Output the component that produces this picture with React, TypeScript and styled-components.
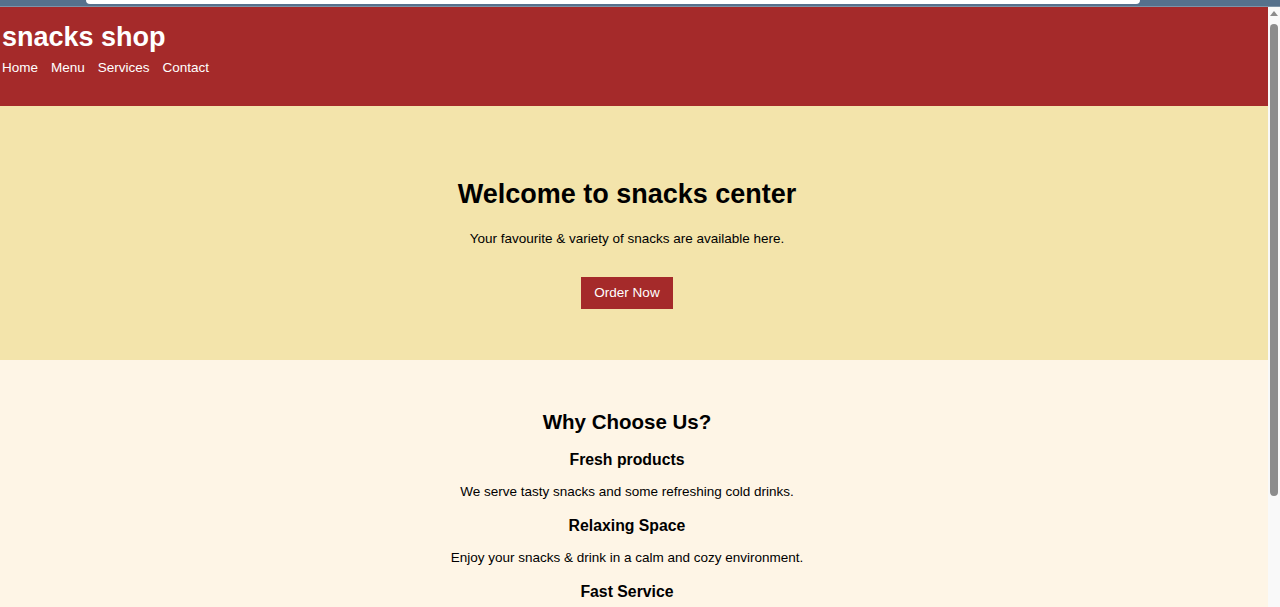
import React from 'react';
import styled, { createGlobalStyle } from 'styled-components';

const GlobalStyle = createGlobalStyle`
  html, body {
    margin: 0;
    padding: 0;
    overflow: hidden;
  }
  body {
    font-family: "Liberation Sans", Arial, sans-serif;
    color: #000;
  }
`;

const features = [
  { title: 'Fresh products', text: 'We serve tasty snacks and some refreshing cold drinks.' },
  { title: 'Relaxing Space', text: 'Enjoy your snacks & drink in a calm and cozy environment.' },
  { title: 'Fast Service', text: 'Quick service so you never have to wait long.' },
];

const App: React.FC = () => {
  return (
    <>
      <GlobalStyle />
      <Window>
        <TabStrip>
          <AddressPill />
        </TabStrip>
        <Viewport>
          <Page>
            <Header>
              <Logo>snacks shop</Logo>
              <Nav>
                <NavLink href="#">Home</NavLink>
                <NavLink href="#">Menu</NavLink>
                <NavLink href="#">Services</NavLink>
                <NavLink href="#">Contact</NavLink>
              </Nav>
            </Header>

            <Hero>
              <HeroTitle>Welcome to snacks center</HeroTitle>
              <HeroText>Your favourite &amp; variety of snacks are available here.</HeroText>
              <OrderButton>Order Now</OrderButton>
            </Hero>

            <Features>
              <FeaturesTitle>Why Choose Us?</FeaturesTitle>
              {features.map((f) => (
                <Feature key={f.title}>
                  <FeatureTitle>{f.title}</FeatureTitle>
                  <FeatureText>{f.text}</FeatureText>
                </Feature>
              ))}
            </Features>
          </Page>

          <Scrollbar>
            <ScrollArrow />
            <ScrollThumb />
          </Scrollbar>
        </Viewport>
      </Window>
    </>
  );
};

const Window = styled.div`
  display: flex;
  flex-direction: column;
  width: 1280px;
  height: 607px;
  overflow: hidden;
`;

const TabStrip = styled.div`
  height: 7px;
  flex: none;
  background: #56718c;
  border-bottom: 1px solid #7d93a8;
  box-sizing: border-box;
  padding-left: 86px;
  padding-right: 140px;
`;

const AddressPill = styled.div`
  height: 4px;
  background: #fff;
  border-radius: 0 0 10px 10px;
`;

const Viewport = styled.div`
  flex: 1;
  display: flex;
  min-height: 0;
`;

const Page = styled.div`
  flex: 1;
  display: flex;
  flex-direction: column;
  min-width: 0;
`;

const Header = styled.header`
  height: 99px;
  flex: none;
  box-sizing: border-box;
  background: #a52a2a;
  color: #fff;
  padding: 14px 0 0 2px;
`;

const Logo = styled.h1`
  margin: 0;
  font-size: 27px;
  line-height: 32px;
  font-weight: bold;
`;

const Nav = styled.nav`
  display: flex;
  gap: 13px;
  margin-top: 7px;
`;

const NavLink = styled.a`
  color: #fff;
  text-decoration: none;
  font-size: 13.5px;
  line-height: 16px;
`;

const Hero = styled.section`
  height: 254px;
  flex: none;
  box-sizing: border-box;
  background: #f3e4ab;
  display: flex;
  flex-direction: column;
  align-items: center;
  padding: 72px 14px 0 0;
`;

const HeroTitle = styled.h2`
  margin: 0;
  font-size: 27px;
  line-height: 32px;
  font-weight: bold;
`;

const HeroText = styled.p`
  margin: 21px 0 0;
  font-size: 13.5px;
  line-height: 16px;
`;

const OrderButton = styled.button`
  margin-top: 30px;
  background: #a52a2a;
  color: #fff;
  border: none;
  font-family: inherit;
  font-size: 13.5px;
  line-height: 16px;
  padding: 8px 13px;
  cursor: pointer;
`;

const Features = styled.section`
  flex: 1;
  background: #fef5e6;
  display: flex;
  flex-direction: column;
  align-items: center;
  padding: 49px 14px 0 0;
`;

const FeaturesTitle = styled.h2`
  margin: 0 0 15px;
  font-size: 20.5px;
  line-height: 26px;
  font-weight: bold;
`;

const Feature = styled.div`
  display: flex;
  flex-direction: column;
  align-items: center;
  margin-bottom: 16px;
`;

const FeatureTitle = styled.h3`
  margin: 0;
  font-size: 15.8px;
  line-height: 19px;
  font-weight: bold;
`;

const FeatureText = styled.p`
  margin: 15px 0 0;
  font-size: 13.5px;
  line-height: 16px;
`;

const Scrollbar = styled.div`
  width: 12px;
  flex: none;
  background: #f9f9f9;
  display: flex;
  flex-direction: column;
  align-items: center;
  padding-top: 4px;
  box-sizing: border-box;
`;

const ScrollArrow = styled.div`
  width: 0;
  height: 0;
  border-left: 4px solid transparent;
  border-right: 4px solid transparent;
  border-bottom: 5px solid #8c8c8c;
`;

const ScrollThumb = styled.div`
  margin-top: 8px;
  width: 8px;
  height: 472px;
  background: #8c8c8c;
  border-radius: 4px;
`;

export default App;
